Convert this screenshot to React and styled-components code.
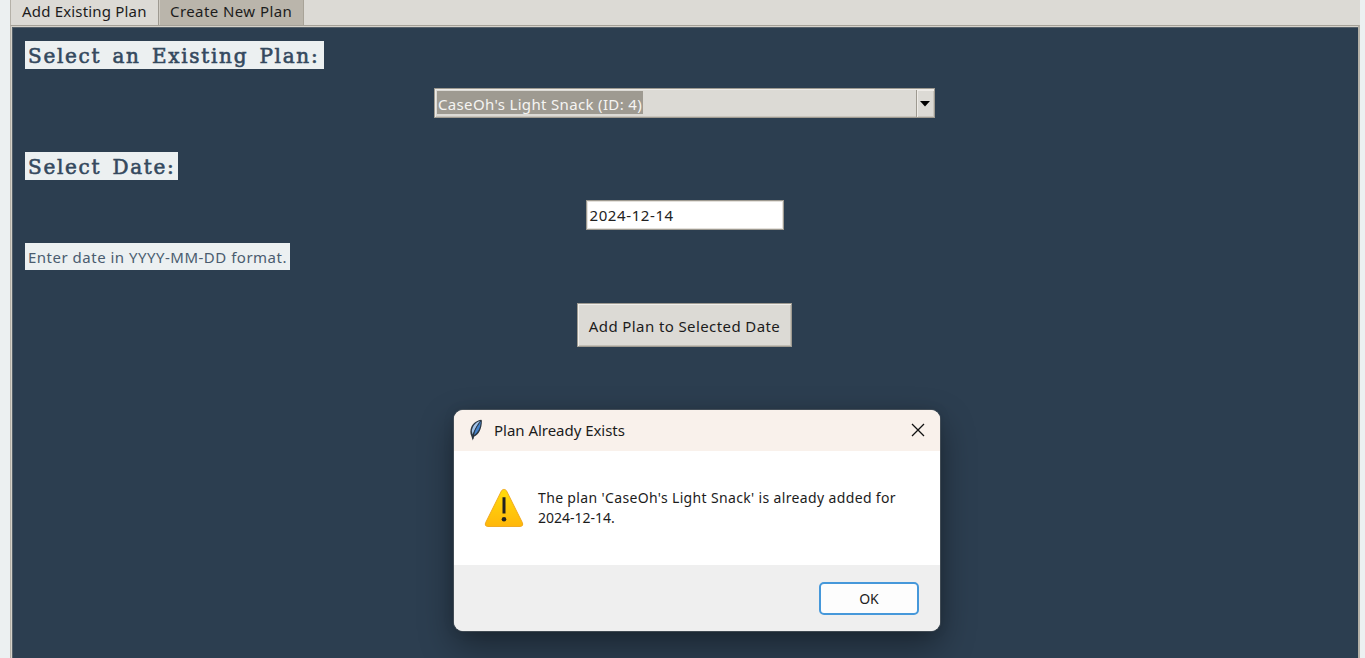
import React from "react";
import styled, { createGlobalStyle } from "styled-components";

const Global = createGlobalStyle`
  * { box-sizing: border-box; }
  body { margin: 0; overflow: hidden; background: #ecf0f1; }
`;

const ui = `"Noto Sans", "Open Sans", "Liberation Sans", sans-serif`;

const Window = styled.main`
  position: relative;
  height: 658px;
  padding: 0 5px 0 10px;
  background: #ecf0f1;
  overflow: hidden;
  font-family: ${ui};
  font-size: 15px;
  color: #1c1c1c;
`;

const Notebook = styled.div`
  display: flex;
  flex-direction: column;
  height: 100%;
`;

const TabBar = styled.div`
  display: flex;
  height: 25px;
  background: #dcdad5;
`;

const Tab = styled.div`
  width: ${(p) => p.$width}px;
  height: 25px;
  padding-left: ${(p) => p.$pad}px;
  line-height: 22px;
  letter-spacing: ${(p) => p.$tracking}px;
  white-space: nowrap;
  background: ${(p) => (p.$active ? "#dcdad5" : "#bab5ab")};
  border-right: 1px solid ${(p) => (p.$active ? "#9e9a91" : "#a8a398")};
  border-left: 1px solid ${(p) => (p.$active ? "#b5b1a8" : "#cfcbc3")};
`;

const Panel = styled.section`
  flex: 1;
  display: flex;
  flex-direction: column;
  align-items: center;
  padding: 13px 13px 0;
  background: #2c3e50;
  border: 1px solid #9e9a91;
  border-width: 1px 2px 0 1px;
  border-color: #a5a198 #b5b1a8 #a5a198 #b5b1a8;
  box-shadow: inset 1px 1px 0 #d6d2ca, inset 2px 2px 0 #54606a;
`;

const Label = styled.label`
  align-self: flex-start;
  width: ${(p) => p.$width}px;
  height: 28px;
  margin: ${(p) => p.$top}px 0 0 1px;
  padding-left: 3px;
  line-height: 28px;
  white-space: nowrap;
  background: #ecf0f1;
  color: #34495e;
`;

const Heading = styled(Label)`
  font: 20px/31px "DejaVu Serif", serif;
  -webkit-text-stroke: 0.6px #34495e;
  letter-spacing: 1.7px;
  word-spacing: 3.2px;
`;

const Hint = styled(Label)`
  height: 27px;
  color: #4a5c6f;
  line-height: 29px;
  letter-spacing: 0.5px;
`;

const Combo = styled.div`
  display: flex;
  width: 501px;
  height: 30px;
  margin-top: 19px;
  padding: 2px 0 2px 2px;
  background: #dcdad5;
  border: 1px solid #9e9a91;
  box-shadow: inset 1px 1px 0 #eeebe7, inset -1px -1px 0 #c9c5bd;
`;

const Selection = styled.span`
  width: 206px;
  height: 23px;
  padding-left: 1px;
  line-height: 26px;
  letter-spacing: 0.34px;
  white-space: nowrap;
  background: #9e9a91;
  color: #f5f4f2;
`;

const ArrowBox = styled.span`
  display: flex;
  align-items: center;
  justify-content: center;
  width: 18px;
  height: 27px;
  margin: -1px 0 0 auto;
  padding-right: 2px;
  border-left: 1px solid #9e9a91;
  box-shadow: inset 1px 1px 0 #eeebe7;
`;

const Entry = styled.div`
  width: 198px;
  height: 30px;
  margin-top: 20px;
  padding-left: 3px;
  line-height: 28px;
  letter-spacing: 0.6px;
  color: #222;
  background: #fff;
  border: 1px solid #9e9a91;
  box-shadow: inset 0 0 0 1px #e4e1dc;
`;

const PlanButton = styled.button`
  width: 215px;
  height: 44px;
  margin-top: 33px;
  padding: 1px 0 0;
  font: 15px ${ui};
  letter-spacing: 0.4px;
  color: #1c1c1c;
  white-space: nowrap;
  background: #dcdad5;
  border: 1px solid #9e9a91;
  box-shadow: inset 1px 1px 0 #f0eeea, inset -1px -1px 0 #c2beb5;
`;

const Dialog = styled.div`
  position: absolute;
  left: 454px;
  top: 410px;
  width: 486px;
  height: 221px;
  display: flex;
  flex-direction: column;
  border-radius: 9px;
  overflow: hidden;
  background: #fff;
  box-shadow: 0 0 0 1px rgba(80, 88, 96, 0.7), 0 14px 34px rgba(0, 0, 0, 0.4), 0 0 12px rgba(0, 0, 0, 0.1);
`;

const TitleBar = styled.header`
  display: flex;
  align-items: center;
  height: 41px;
  padding: 0 15px 2px 14px;
  background: #f9f1eb;
`;

const Title = styled.span`
  flex: 1;
  margin-left: 10px;
  white-space: nowrap;
  font-size: 15px;
  letter-spacing: -0.03px;
`;

const Message = styled.div`
  flex: 1;
  display: flex;
  align-items: flex-start;
  padding: 37px 0 0 30px;
`;

const MessageText = styled.p`
  margin: 0 0 0 14px;
  font-size: 14px;
  line-height: 20px;
  letter-spacing: 0.35px;
  white-space: nowrap;
`;

const LastLine = styled.span`
  letter-spacing: 0;
`;

const Footer = styled.footer`
  display: flex;
  justify-content: flex-end;
  height: 66px;
  padding: 17px 21px 0 0;
  background: #efefef;
`;

const OkButton = styled.button`
  width: 100px;
  height: 33px;
  padding: 0;
  font: 14px ${ui};
  color: #222;
  background: #fdfdfd;
  border: 2px solid #4698da;
  border-radius: 5px;
`;

const Feather = () => (
  <svg width="16" height="22" viewBox="0 0 16 22">
    <path d="M13.200.8C9.500 1.200 5 4 3.300 8 2.100 11 1.900 14.500 3.400 17.200L4.800 21.500l1.200-3.800C10.700 16 14 9.800 13.900 1.500Z" fill="#2b3743" />
    <path d="M12 2C8 3.200 4.500 6.800 3.800 12L4.500 15.500C6.500 10 9 6 12 2Z" fill="#a3c3e8" />
    <path d="M12.700 2.500C12.700 8 10.300 13.500 6 16 6.300 12 9 6.500 12.700 2.500Z" fill="#4583cc" />
    <path d="M11.300 4.500C8 8.500 5.600 13 4.900 20" fill="none" stroke="#26323d" strokeWidth=".7" />
  </svg>
);

const Warning = () => (
  <svg width="40" height="40" viewBox="0 0 40 40">
    <defs>
      <linearGradient id="amber" x1="0" y1="0" x2="0" y2="1">
        <stop offset="0" stopColor="#ffdc0a" />
        <stop offset="1" stopColor="#ffb70b" />
      </linearGradient>
    </defs>
    <path d="M17.400 3C18.500.9 21.500.9 22.600 3L38.300 34.500C39.300 36.600 38.500 38.500 36.200 38.500H3.800C1.500 38.500.7 36.600 1.700 34.500Z" fill="url(#amber)" stroke="#eea51a" strokeWidth=".9" />
    <path d="M20 9.300V25.500" stroke="#222" strokeWidth="3" />
    <circle cx="20" cy="31.300" r="2.300" fill="#222" />
  </svg>
);

export default function App() {
  return (
    <Window>
      <Global />
      <Notebook>
        <TabBar>
          <Tab $active $width={149} $pad={11} $tracking={0.18}>Add Existing Plan</Tab>
          <Tab $width={145} $pad={10} $tracking={0.42}>Create New Plan</Tab>
        </TabBar>
        <Panel>
          <Heading $width={299} $top={2}>Select an Existing Plan:</Heading>
          <Combo>
            <Selection>CaseOh's Light Snack (ID: 4)</Selection>
            <ArrowBox>
              <svg width="10" height="6" viewBox="0 0 10 6"><path d="M0 0H10L5 5.500Z" fill="#000" /></svg>
            </ArrowBox>
          </Combo>
          <Heading $width={153} $top={34}>Select Date:</Heading>
          <Entry>2024-12-14</Entry>
          <Hint $width={265} $top={13}>Enter date in YYYY-MM-DD format.</Hint>
          <PlanButton>Add Plan to Selected Date</PlanButton>
        </Panel>
      </Notebook>
      <Dialog role="dialog">
        <TitleBar>
          <Feather />
          <Title>Plan Already Exists</Title>
          <svg width="14" height="14" viewBox="0 0 14 14"><path d="M1 1L13 13M13 1L1 13" stroke="#111" strokeWidth="1.300" /></svg>
        </TitleBar>
        <Message>
          <Warning />
          <MessageText>The plan 'CaseOh's Light Snack' is already added for<br /><LastLine>2024-12-14.</LastLine></MessageText>
        </Message>
        <Footer><OkButton>OK</OkButton></Footer>
      </Dialog>
    </Window>
  );
}
